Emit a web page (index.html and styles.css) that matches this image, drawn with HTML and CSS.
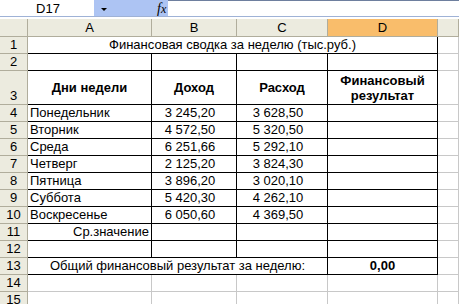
FILE: index.html
```html
<!DOCTYPE html>
<html lang="ru">
<head>
    <meta charset="UTF-8">
    <title>Финансовая сводка</title>
    <link rel="stylesheet" href="styles.css">
</head>
<body>

    <div class="formula-bar">
        <div class="name-box">D17</div>
        <div class="name-btn"><span class="arrow"></span><span class="fx"><i>f</i>x</span></div>
        <div class="formula-field"></div>
    </div>

    <div class="sheet">
        <div class="ch corner"></div>
        <div class="ch">A</div>
        <div class="ch">B</div>
        <div class="ch">C</div>
        <div class="ch active">D</div>
        <div class="ch"></div>

        <div class="rh">1</div>
        <div class="c b span4 center">Финансовая сводка за неделю (тыс.руб.)</div>
        <div class="c"></div>

        <div class="rh">2</div>
        <div class="c b"></div><div class="c b"></div><div class="c b"></div><div class="c b"></div>
        <div class="c"></div>

        <div class="rh">3</div>
        <div class="c b head">Дни недели</div>
        <div class="c b head">Доход</div>
        <div class="c b head">Расход</div>
        <div class="c b head">Финансовый<br>результат</div>
        <div class="c"></div>

        <div class="rh">4</div>
        <div class="c b">Понедельник</div><div class="c b num">3 245,20</div><div class="c b num">3 628,50</div><div class="c b"></div>
        <div class="c"></div>

        <div class="rh">5</div>
        <div class="c b">Вторник</div><div class="c b num">4 572,50</div><div class="c b num">5 320,50</div><div class="c b"></div>
        <div class="c"></div>

        <div class="rh">6</div>
        <div class="c b">Среда</div><div class="c b num">6 251,66</div><div class="c b num">5 292,10</div><div class="c b"></div>
        <div class="c"></div>

        <div class="rh">7</div>
        <div class="c b">Четверг</div><div class="c b num">2 125,20</div><div class="c b num">3 824,30</div><div class="c b"></div>
        <div class="c"></div>

        <div class="rh">8</div>
        <div class="c b">Пятница</div><div class="c b num">3 896,20</div><div class="c b num">3 020,10</div><div class="c b"></div>
        <div class="c"></div>

        <div class="rh">9</div>
        <div class="c b">Суббота</div><div class="c b num">5 420,30</div><div class="c b num">4 262,10</div><div class="c b"></div>
        <div class="c"></div>

        <div class="rh">10</div>
        <div class="c b">Воскресенье</div><div class="c b num">6 050,60</div><div class="c b num">4 369,50</div><div class="c b"></div>
        <div class="c"></div>

        <div class="rh">11</div>
        <div class="c b right">Ср.значение</div><div class="c b"></div><div class="c b"></div><div class="c b"></div>
        <div class="c"></div>

        <div class="rh">12</div>
        <div class="c b"></div><div class="c b"></div><div class="c b"></div><div class="c b"></div>
        <div class="c"></div>

        <div class="rh">13</div>
        <div class="c b span3 center">Общий финансовый результат за неделю:</div>
        <div class="c b center bold">0,00</div>
        <div class="c"></div>

        <div class="rh">14</div>
        <div class="c"></div><div class="c"></div><div class="c"></div><div class="c"></div><div class="c"></div>

        <div class="rh">15</div>
        <div class="c"></div><div class="c"></div><div class="c"></div><div class="c"></div><div class="c"></div>
    </div>

</body>
</html>
```

FILE: styles.css
```css
body {
    margin: 0;
    width: 459px;
    height: 304px;
    overflow: hidden;
    background: #fff;
    font-family: "Liberation Sans", Arial, sans-serif;
    font-size: 13px;
    color: #000;
}

.formula-bar {
    display: flex;
    height: 16px;
    border-bottom: 1px solid #9fb2d6;
    margin-bottom: 2px;
}

.name-box {
    width: 94px;
    text-align: center;
    line-height: 17px;
    padding-left: 2px;
    box-sizing: border-box;
}

.name-btn {
    width: 74px;
    background: #adc4f3;
    position: relative;
}

.arrow {
    position: absolute;
    left: 7px;
    top: 8px;
    border-left: 3px solid transparent;
    border-right: 3px solid transparent;
    border-top: 3px solid #000;
}

.fx {
    position: absolute;
    left: 63px;
    top: 1px;
    font-family: "Liberation Serif", serif;
    font-style: italic;
    font-size: 12px;
}

.fx i {
    font-size: 14px;
}

.formula-field {
    flex: 1;
    border-top: 1px solid #6e7f9e;
}

.sheet {
    display: grid;
    grid-template-columns: 28px 124px 85px 91px 110px 1fr;
    grid-template-rows: 18px 17px 17px 34px repeat(12, 17px);
    background: #f6f6f2;
}

.ch, .rh, .c {
    box-sizing: border-box;
    border-right: 1px solid #c8c8c8;
    border-bottom: 1px solid #c8c8c8;
    white-space: nowrap;
    overflow: hidden;
}

.ch {
    background: #ecebdf;
    border-color: #b0ad9c;
    text-align: center;
    line-height: 17px;
}

.ch.active {
    background: #f9bd6b;
}

.rh {
    background: #ecebdf;
    border-color: #b0ad9c;
    display: flex;
    align-items: flex-end;
    justify-content: center;
    line-height: 16px;
}

.c {
    background: #fff;
    padding-left: 2px;
    line-height: 16px;
}

.c.b {
    border-right-color: #000;
    border-bottom-color: #000;
}

.span4 {
    grid-column: span 4;
}

.span3 {
    grid-column: span 3;
}

.center {
    text-align: center;
    padding-left: 0;
}

.right {
    text-align: right;
    padding-right: 2px;
}

.num {
    text-align: center;
    padding-right: 10px;
}

.bold {
    font-weight: bold;
}

.head {
    font-weight: bold;
    display: flex;
    align-items: center;
    justify-content: center;
    text-align: center;
    line-height: 15px;
    padding-left: 0;
}
```
